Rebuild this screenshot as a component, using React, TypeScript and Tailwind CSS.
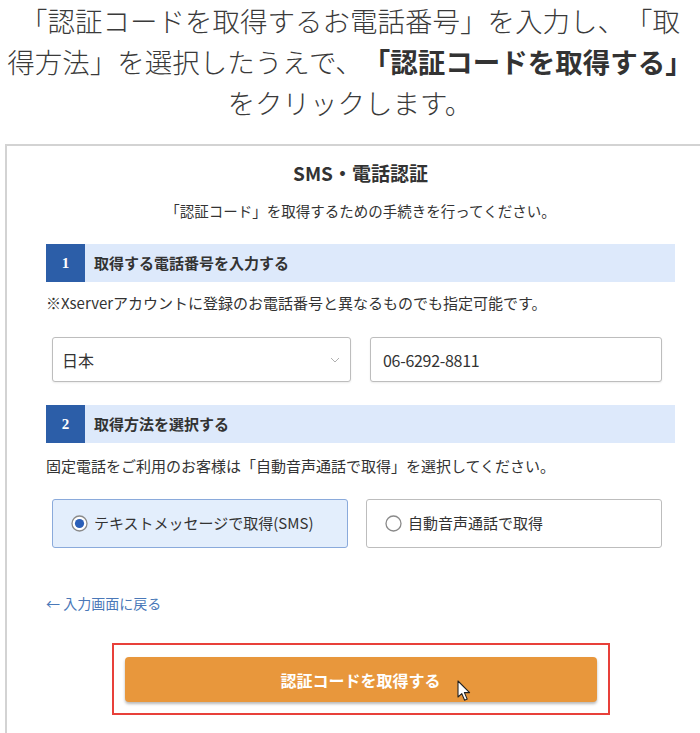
import React from 'react';

const jp = { fontFamily: '"Noto Sans CJK JP", "Noto Sans", sans-serif' };

function StepHeader({ num, label }: { num: string; label: string }) {
    return (
        <div className="flex h-[38px] w-[629px] items-center bg-[#dde9fb]">
            <div
                className="flex h-full w-[39px] items-center justify-center bg-[#2c5ea8] text-[15px] font-bold text-white"
                style={{ fontFamily: '"Liberation Serif", serif' }}
            >
                {num}
            </div>
            <span className="ml-[9px] text-[15px] font-bold text-[#333]">{label}</span>
        </div>
    );
}

function Radio({ checked, label }: { checked: boolean; label: string }) {
    return (
        <div
            className={
                checked
                    ? 'flex h-[49px] flex-1 items-center rounded-[3px] border border-[#8aaadb] bg-[#e3eefc] pl-[18px]'
                    : 'flex h-[49px] flex-1 items-center rounded-[3px] border border-[#bdbdbd] bg-white pl-[18px]'
            }
        >
            <svg width="17" height="17" viewBox="0 0 17 17">
                <circle cx="8.5" cy="8.5" r="7.5" fill="white" stroke="#8a8a8a" strokeWidth="1.3" />
                {checked && <circle cx="8.5" cy="8.5" r="4.6" fill="#2b5fb8" />}
            </svg>
            <span className="ml-[6px] text-[15px] text-[#333]">{label}</span>
        </div>
    );
}

export default function App() {
    return (
        <div
            className="h-[733px] w-[700px] overflow-hidden bg-white [text-spacing-trim:space-all]"
            style={jp}
        >
            <div className="text-center text-[27.5px] font-light leading-[41px] text-[#3a3a3a]">
                <div className="whitespace-nowrap">「認証コードを取得するお電話番号」を入力し、「取</div>
                <div className="whitespace-nowrap">
                    得方法」を選択したうえで、<span className="font-bold text-[#333]">「認証コードを取得する」</span>
                </div>
                <div className="whitespace-nowrap">をクリックします。</div>
            </div>

            <div className="ml-[5px] mt-[21px] h-[600px] w-[711px] border-l-2 border-t-2 border-[#d3d3d3] pl-[39px] pt-[15px]">
                <div className="w-[629px]">
                    <div className="text-center text-[19px] font-bold leading-[24px] text-[#333]">
                        SMS・電話認証
                    </div>
                    <div className="mt-[16px] text-center text-[14.5px] leading-[20px] text-[#333]">
                        「認証コード」を取得するための手続きを行ってください。
                    </div>

                    <div className="mt-[23px]">
                        <StepHeader num="1" label="取得する電話番号を入力する" />
                    </div>
                    <div className="mt-[11px] text-[15px] leading-[20px] text-[#333]">
                        ※Xserverアカウントに登録のお電話番号と異なるものでも指定可能です。
                    </div>
                    <div className="ml-[6px] mt-[24px] flex w-[610px] gap-[19px]">
                        <div className="flex h-[45px] flex-1 items-center justify-between rounded-[3px] border border-[#bdbdbd] bg-white pl-[9px] pr-[10px] shadow-[0_1px_2px_rgba(0,0,0,0.08)]">
                            <span className="text-[16px] text-[#333]">日本</span>
                            <svg width="10" height="6" viewBox="0 0 10 6">
                                <path d="M1 1 L5 5 L9 1" fill="none" stroke="#b0b0b0" strokeWidth="1" />
                            </svg>
                        </div>
                        <div className="flex h-[45px] flex-1 items-center rounded-[3px] border border-[#bdbdbd] bg-white pl-[12px] shadow-[0_1px_2px_rgba(0,0,0,0.08)]">
                            <span className="text-[16px] tracking-[-0.3px] text-[#333]">06-6292-8811</span>
                        </div>
                    </div>

                    <div className="mt-[23px]">
                        <StepHeader num="2" label="取得方法を選択する" />
                    </div>
                    <div className="mt-[13px] text-[15px] leading-[20px] text-[#333]">
                        固定電話をご利用のお客様は「自動音声通話で取得」を選択してください。
                    </div>
                    <div className="ml-[6px] mt-[23px] flex w-[610px] gap-[18px]">
                        <Radio checked label="テキストメッセージで取得(SMS)" />
                        <Radio checked={false} label="自動音声通話で取得" />
                    </div>

                    <div className="mt-[45px] text-[14px] leading-[20px] text-[#4a78b8]">← 入力画面に戻る</div>

                    <div className="mt-[30px] flex justify-center">
                        <div className="border-2 border-[#e8403a] px-[11px] pb-[11px] pt-[12px]">
                            <div className="relative flex h-[45px] w-[472px] items-center justify-center rounded-[4px] bg-[#e8973c] shadow-[0_2px_3px_rgba(0,0,0,0.28)]">
                                <span className="text-[16px] font-bold text-white">認証コードを取得する</span>
                                <svg
                                    className="absolute left-[332px] top-[23px]"
                                    width="14"
                                    height="22"
                                    viewBox="0 0 14 22"
                                >
                                    <path
                                        d="M1 1 L1 17 L4.8 13.6 L7.6 20.2 L10.2 19.1 L7.4 12.6 L12.6 12.6 Z"
                                        fill="white"
                                        stroke="#222"
                                        strokeWidth="1.1"
                                        strokeLinejoin="round"
                                    />
                                </svg>
                            </div>
                        </div>
                    </div>
                </div>
            </div>
        </div>
    );
}
